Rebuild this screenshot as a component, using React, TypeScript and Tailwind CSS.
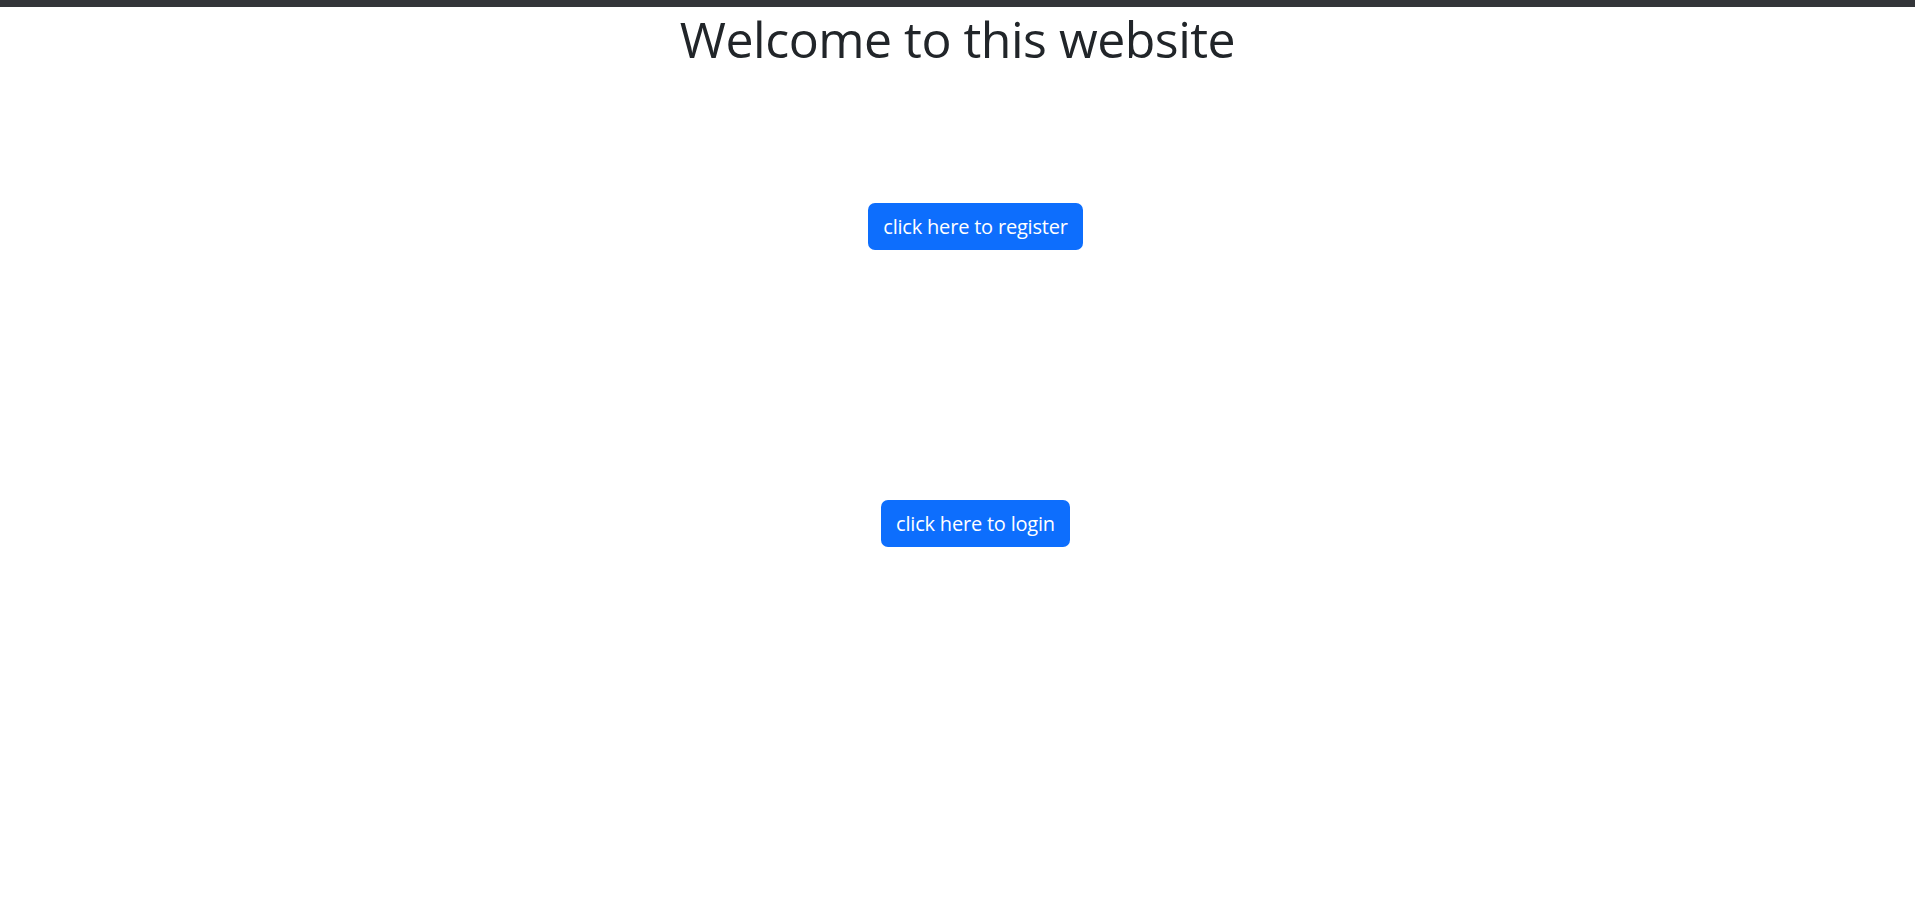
export default function App() {
  return (
    <div
      className="min-h-screen bg-white text-[#212529]"
      style={{ fontFamily: '"Open Sans", "Noto Sans", sans-serif' }}
    >
      {/* top strip */}
      <div className="h-[7px] bg-[#333539]" />

      <h1 className="text-center text-[50px] font-medium leading-[60px] tracking-[-0.01em] mt-[2px]">
        Welcome to this website
      </h1>

      <div className="flex flex-col items-center pl-[36px] pt-[134px]">
        <button className="h-[47px] rounded-[7px] bg-[#0d6efd] px-[15px] text-[20px] leading-[30px] text-white tracking-[-0.01em]">
          click here to register
        </button>
        <button className="mt-[250px] h-[47px] rounded-[7px] bg-[#0d6efd] px-[15px] text-[20px] leading-[30px] text-white tracking-[-0.01em]">
          click here to login
        </button>
      </div>
    </div>
  );
}
